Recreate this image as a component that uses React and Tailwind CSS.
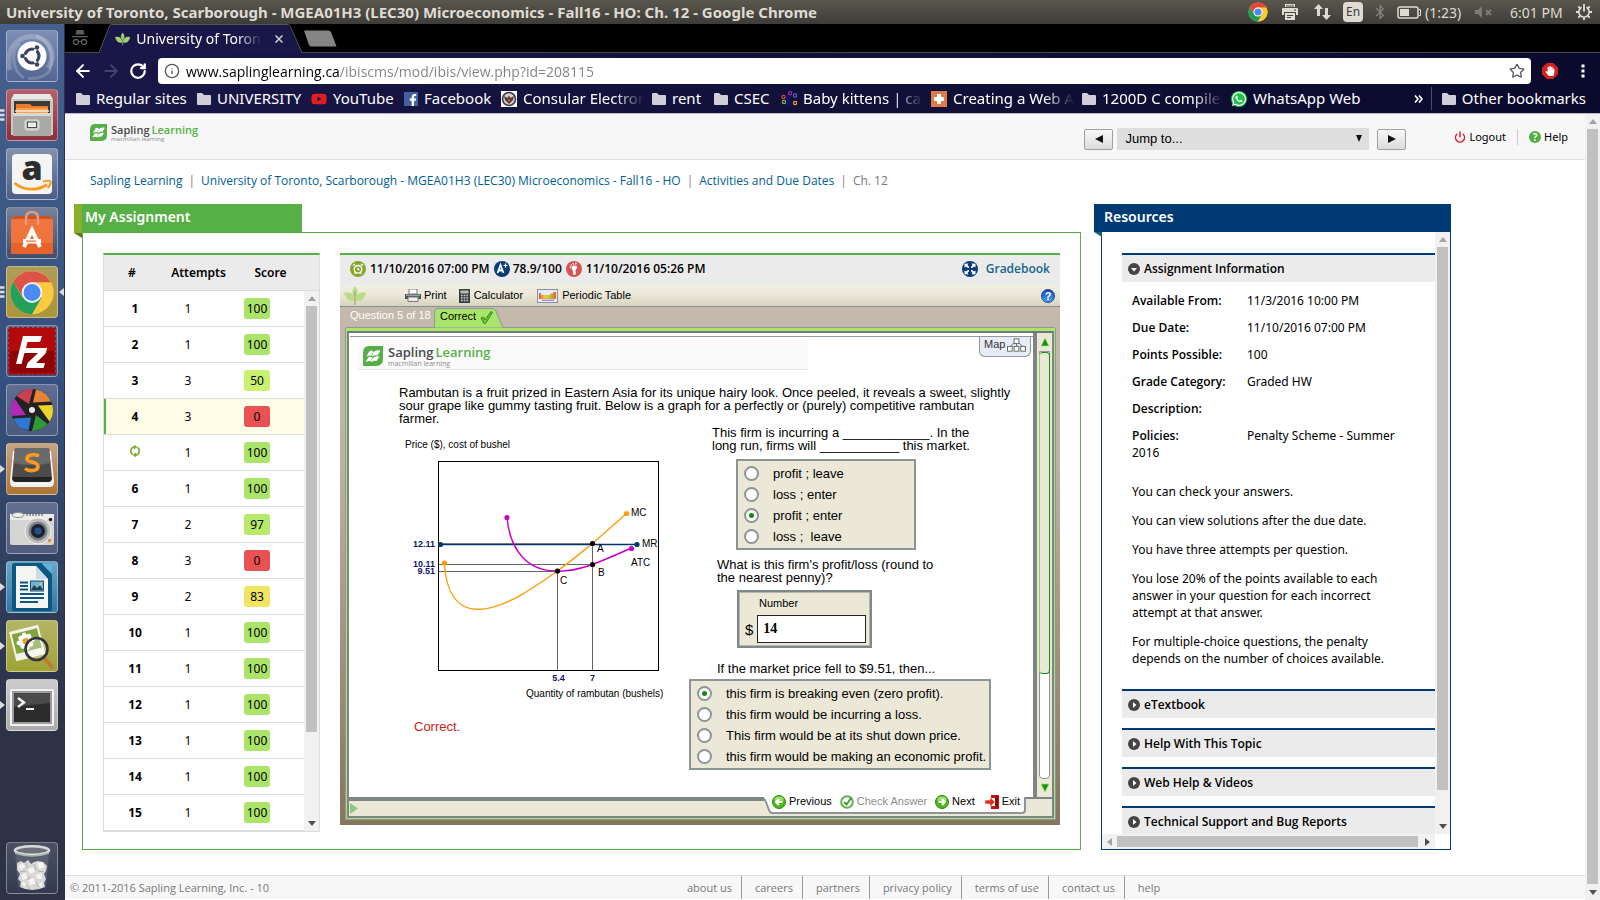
import React from "react";
import { ArrowLeft, ArrowRight, RotateCw, Info, Star, Power } from "lucide-react";
import { FaBluetoothB, FaWhatsapp, FaYoutube, FaFacebookF, FaHandPaper } from "react-icons/fa";

/* ---------- shared drawings ---------- */

function ChromeLogo({ className }) {
  return (
    <svg viewBox="0 0 48 48" className={className} aria-hidden="true">
      <circle cx="24" cy="24" r="23" fill="#fcc934" />
      <path d="M4.1 12.5 A23 23 0 0 0 24 47 L34 29.5 L24 24 L14.4 29.5 Z" fill="#1f9d58" />
      <path d="M43.9 12.5 A23 23 0 0 1 24 47 L34 29 L31 13 Z" fill="#fcc934" />
      <path d="M24 13 H43.9 A23 23 0 0 0 4.1 12.5 L14.5 29.5 L20 14 Z" fill="#e0463b" />
      <circle cx="24" cy="24" r="11" fill="#fff" />
      <circle cx="24" cy="24" r="8.6" fill="#4c8bf5" />
    </svg>
  );
}

function Leaf({ className, color = "#b7d98b" }) {
  return (
    <svg viewBox="0 0 24 20" className={className} aria-hidden="true">
      <path d="M12 0 C8 5 8.500 9 12 13 C15.500 9 16 5 12 0Z" fill={color} />
      <path d="M0 7 C5 5 11 8 11.800 15 C6 18 2 14 0 7Z" fill={color} />
      <path d="M24 7 C19 5 13 8 12.200 15 C18 18 22 14 24 7Z" fill={color} />
      <path d="M12 6 V20" stroke="#a9a35c" strokeWidth="1.200" />
    </svg>
  );
}

function SaplingMark({ className }) {
  return (
    <svg viewBox="0 0 20 20" className={className} aria-hidden="true">
      <path d="M6 0 H20 V13 Q20 20 13 20 H0 V7 Q0 0 6 0Z" fill="#56ae47" />
      <path d="M3.500 10.500 L6.500 5 Q9.500 3.500 10.500 6 Q13 3.500 17.500 4.500 L14.500 9.500 Q11.500 8.500 9.500 10.500 Q8 8.500 3.500 10.500Z" fill="#fff" />
      <path d="M2.500 16 L5.500 11.200 Q8.500 10 9.500 12.200 Q12 9.800 16.500 10.500 L13.500 15 Q11 14 8.500 16 Q7 14.200 2.500 16Z" fill="#fff" />
      <path d="M10.500 6 L8.800 9.500 M9.500 12.200 L7.800 15.300" stroke="#56ae47" strokeWidth=".5" />
    </svg>
  );
}

function Folder() {
  return (
    <svg viewBox="0 0 14 12" className="h-3 w-3.5 shrink-0" aria-hidden="true">
      <path d="M1 0 H5 L7 2 H13 Q14 2 14 3 V11 Q14 12 13 12 H1 Q0 12 0 11 V1 Q0 0 1 0Z" fill="#cfced9" />
    </svg>
  );
}

function Triangle({ dir, color = "#505050" }) {
  const d = {
    up: "M0 5 L4 0 L8 5Z",
    down: "M0 0 H8 L4 5Z",
    left: "M6 0 V8 L1 4Z",
    right: "M1 0 V8 L6 4Z",
  }[dir];
  return (
    <svg viewBox="0 0 8 8" className={dir === "up" || dir === "down" ? "mt-0.5 h-2 w-2" : "h-2 w-2"} aria-hidden="true">
      <path d={d} fill={color} />
    </svg>
  );
}

function ScrollTrack({ thumb }) {
  return (
    <div className="flex w-[15px] shrink-0 grow flex-col items-center bg-[#f1f1f1]" aria-hidden="true">
      <div className="flex h-[15px] items-center justify-center">
        <Triangle dir="up" color="#a3a3a3" />
      </div>
      <div className="flex w-full flex-1 flex-col items-center">
        <div className={"w-[11px] bg-[#c1c1c1] " + thumb} />
      </div>
      <div className="flex h-[15px] items-center justify-center">
        <Triangle dir="down" />
      </div>
    </div>
  );
}

/* ---------- desktop panel ---------- */

function TopPanel() {
  return (
    <header className="flex h-6 shrink-0 items-center bg-linear-to-b from-[#5a574e] to-[#3d3c38] pr-2 pl-1.5 font-['Noto_Sans',sans-serif] text-[#dfdbd2]">
      <h1 className="flex-1 truncate text-[15px] font-bold">
        University of Toronto, Scarborough - MGEA01H3 (LEC30) Microeconomics - Fall16 - HO: Ch. 12 - Google Chrome
      </h1>
      <div className="flex items-center">
        <ChromeLogo className="mr-3.5 h-5 w-5" />
        <svg viewBox="0 0 16 16" className="mr-4 h-4 w-4" aria-hidden="true">
          <path d="M3 0 H13 V3 H3Z M0 5 Q0 4 1 4 H15 Q16 4 16 5 V11 H14 V8 H2 V11 H0Z M3 9 H13 V16 H3Z" fill="#dfdbd2" />
          <path d="M4 2 H12 M5 11.500 H11 M5 13.500 H9 M12 6 H14" stroke="#45443f" />
        </svg>
        <svg viewBox="0 0 17 16" className="mr-3 h-4 w-[17px]" aria-hidden="true">
          <path d="M4.500 0 L9 5 H6 V12 H3 V5 H0Z M12.500 16 L8 11 H11 V4 H14 V11 H17Z" fill="#dfdbd2" />
        </svg>
        <span className="mr-3 flex h-5 w-5 items-center justify-center rounded-sm bg-[#dfdbd2] text-[12px] text-[#3c3b37]">En</span>
        <FaBluetoothB className="mr-3 h-4 w-[10px] text-[#85837b]" />
        <svg viewBox="0 0 24 13" className="mr-1 h-[13px] w-6" aria-hidden="true">
          <rect x="1" y="1" width="20" height="11" rx="2" fill="none" stroke="#dfdbd2" strokeWidth="1.500" />
          <rect x="3" y="3" width="9" height="7" fill="#dfdbd2" />
          <path d="M22 3.500 H23.500 V9.500 H22" fill="none" stroke="#dfdbd2" />
        </svg>
        <span className="w-[50px] text-[14px]">(1:23)</span>
        <svg viewBox="0 0 17 12" className="mr-[18px] h-3 w-[17px]" aria-hidden="true">
          <path d="M0 4 H3 L7 0 V12 L3 8 H0Z" fill="#7d7b74" />
          <path d="M11 4 L16 9 M16 4 L11 9" stroke="#7d7b74" strokeWidth="1.800" />
        </svg>
        <span className="mr-3 w-[54px] text-[14px] whitespace-nowrap">6:01 PM</span>
        <svg viewBox="0 0 16 16" className="h-4 w-4" aria-hidden="true">
          <circle cx="8" cy="8" r="5.200" fill="none" stroke="#dfdbd2" strokeWidth="1.600" />
          <path d="M8 13 V16 M0 8 H3 M13 8 H16 M2.300 2.300 L4.500 4.500 M13.700 2.300 L11.500 4.500 M2.300 13.700 L4.500 11.500 M13.700 13.700 L11.500 11.500" stroke="#dfdbd2" strokeWidth="1.800" />
          <path d="M8 0 V8" stroke="#4a4943" strokeWidth="4.500" />
          <path d="M8 0 V7.500" stroke="#dfdbd2" strokeWidth="1.800" />
        </svg>
      </div>
    </header>
  );
}

/* ---------- launcher ---------- */

const launcherArt = {
  dash: (
    <>
      <path d="M4 40 C-2 18 14 2 34 8 C46 12 50 28 42 38" fill="none" stroke="#fff" strokeOpacity=".22" strokeWidth="5" />
      <path d="M18 48 C6 40 4 22 14 14 M30 6 C44 10 48 26 44 40 C40 46 30 50 22 48" fill="none" stroke="#fff" strokeOpacity=".18" strokeWidth="3" />
      <circle cx="26" cy="26" r="14.500" fill="#fff" />
      <circle cx="26" cy="26" r="7" fill="none" stroke="#3a4463" strokeWidth="3.200" />
      <path d="M26 26 L13 26 M26 26 L32.500 14.700 M26 26 L32.500 37.300" stroke="#fff" strokeWidth="2.500" />
      <circle cx="26" cy="26" r="5" fill="#fff" />
      <circle cx="16.500" cy="26" r="2.300" fill="#3a4463" />
      <circle cx="31" cy="17.500" r="2.300" fill="#3a4463" />
      <circle cx="31" cy="34.500" r="2.300" fill="#3a4463" />
    </>
  ),
  files: (
    <>
      <path d="M8 5 H44 L47 10 V46 H5 V10Z" fill="#c9c9c7" />
      <path d="M8 5 H44 L46 10 H6Z" fill="#e8e8e6" />
      <rect x="8" y="12" width="36" height="14" fill="#3a3a38" />
      <path d="M10 15 H24 L26 17 H42 V24 H10Z" fill="#e87c2a" />
      <path d="M10 19 H42 V25 H10Z" fill="#f6a04d" />
      <path d="M9 22 H43" stroke="#f4ead8" strokeWidth="1.500" />
      <path d="M7 25 H45 V47 H7Z" fill="#a9a9a7" />
      <path d="M7 24 H45 V27 H7Z" fill="#d9d9d7" />
      <rect x="19" y="31" width="14" height="10" rx="2" fill="#c9c9c7" stroke="#dededc" />
      <rect x="21.500" y="33" width="9" height="5.500" fill="#efefed" stroke="#4a4a48" />
    </>
  ),
  amazon: (
    <>
      <rect x="6" y="6" width="40" height="40" rx="4" fill="#f4f4f2" />
      <text x="26" y="31.500" textAnchor="middle" fontFamily="Open Sans, sans-serif" fontWeight="800" fontSize="34" fill="#2e2d2b">a</text>
      <path d="M8.500 35 C18 43 32 43 41 36.500" fill="none" stroke="#f89a1c" strokeWidth="2.800" />
      <path d="M37 33.500 C41 32.500 44 32.500 44.500 33.500 C45 35 43.500 38 41.500 40" fill="none" stroke="#f89a1c" strokeWidth="2" />
    </>
  ),
  software: (
    <>
      <path d="M5 12 L9 9 H44 L47 12 V47 H5Z" fill="#f0743c" />
      <path d="M5 12 L9 9 H44 L47 12Z" fill="#c95423" />
      <path d="M5 36 H47 V47 H5Z" fill="#e8632c" />
      <path d="M20 18 V11 Q20 5 26 5 Q32 5 32 11 V18" fill="none" stroke="#e79a76" strokeWidth="2.600" />
      <path d="M18 40 L26 23 L34 40" fill="none" stroke="#fff" strokeWidth="4" />
      <rect x="17" y="32" width="18" height="4.500" rx="1" fill="#fff" />
      <path d="M20 34.200 H30" stroke="#f0743c" strokeWidth="1.200" />
    </>
  ),
  chrome: (
    <g transform="translate(3.500 4) scale(.94)">
      <circle cx="24" cy="24" r="23" fill="#fcca3f" />
      <path d="M4.100 12.500 A23 23 0 0 0 24 47 L34 29.500 H14Z" fill="#23a05b" />
      <path d="M24 13 H43.900 A23 23 0 0 0 4.100 12.500 L14.500 29.500 L20 14 Z" fill="#dd5347" />
      <circle cx="24" cy="24" r="11" fill="#f3f3f3" />
      <circle cx="24" cy="24" r="9" fill="#4c8bf5" />
    </g>
  ),
  filezilla: (
    <>
      <rect x="3" y="3" width="46" height="46" fill="#b30b0b" stroke="#b30b0b" strokeWidth="2" strokeDasharray="3 2" />
      <rect x="4" y="26" width="44" height="22" fill="#8f0404" />
      <path d="M10 39 L17 11 H36 L34 17 H21.500 L20 23 H30 L28.500 28 H18.500 L15.500 39Z" fill="#fff" />
      <path d="M25 23 H41 L40 28 L30 38 H39 L37.500 43 H20 L21.500 38 L32 28 H24Z" fill="#fff" />
    </>
  ),
  shutter: (
    <g transform="translate(26 26)">
      <circle r="21" fill="#222" />
      <path d="M-15.500 -14 A21 21 0 0 1 1 -21 L-3 -6Z" fill="#c8414f" />
      <path d="M4 -20.600 A21 21 0 0 1 19 -8.500 L1 -7.500Z" fill="#e8843a" />
      <path d="M20.400 -5 A21 21 0 0 1 17.500 11.500 L6 -4.500Z" fill="#ecd32e" />
      <path d="M15.500 14 A21 21 0 0 1 0 21 L4 5Z" fill="#2f9a35" />
      <path d="M-3.500 20.600 A21 21 0 0 1 -19 8.500 L-1 7.500Z" fill="#2f77d2" />
      <path d="M-20.400 6 A21 21 0 0 1 -17.500 -11.500 L-6 5Z" fill="#b02ab5" />
      <circle r="3" fill="#e8e8e8" />
    </g>
  ),
  sublime: (
    <>
      <path d="M7 8 H45 L48 38 Q48 44 44 44 H8 Q4 44 4 38Z" fill="#f2f2f2" />
      <path d="M9 5 H43 L46 35 Q46 39 42 39 H10 Q6 39 6 35Z" fill="#4b4b4b" />
      <path d="M9 5 H43 L44.500 20 Q26 24 7.500 20Z" fill="#6a6a6a" />
      <path d="M6.500 34 H45.500 V36 Q45 39 42 39 H10 Q7 39 6.500 36Z" fill="#222" />
      <path d="M33 13 C28 10.500 21 12 21 16 C21 20 32 18 32 23.500 C32 28 23 29 19 25.500" fill="none" stroke="#ff9a1f" strokeWidth="3.600" />
    </>
  ),
  camera: (
    <>
      <rect x="4" y="12" width="44" height="31" rx="2" fill="#d4d4d2" />
      <rect x="4" y="12" width="44" height="6" fill="#ececea" />
      <ellipse cx="12" cy="13" rx="6" ry="2.500" fill="#efefed" stroke="#8d8d8b" />
      <path d="M20 13 H38" stroke="#7f7f7d" strokeWidth="1.500" strokeDasharray="2 1" />
      <circle cx="32" cy="29" r="13" fill="#bdbdbb" stroke="#f3f3f1" />
      <circle cx="32" cy="29" r="9.500" fill="#7b7d83" />
      <circle cx="32" cy="29" r="7" fill="#1b2233" />
      <circle cx="32" cy="29" r="3.500" fill="#27508f" />
      <circle cx="44.500" cy="17.500" r="1.800" fill="#222" />
      <rect x="42" y="37" width="3" height="3" fill="#e8922c" />
    </>
  ),
  writer: (
    <>
      <path d="M9 2 H36 L46 13 V47 Q46 50 43 50 H9 Q6 50 6 47 V5 Q6 2 9 2Z" fill="#0d5780" />
      <path d="M10 5 H30 L42 18 V47 H10Z" fill="#f5f5f3" />
      <path d="M30 5 V18 H42Z" fill="#c9dbe6" />
      <path d="M36 3 L46 13 V4 Q46 3 45 3Z" fill="#5eb3dd" />
      <path d="M14 21.500 H22 M14 25 H22 M14 28.500 H22 M14 33 H38 M14 37 H38 M14 41 H32" stroke="#0d5780" strokeWidth="1.800" />
      <rect x="24.500" y="20" width="13" height="10" fill="#6fb3d8" stroke="#0d5780" />
      <path d="M25 29 L28 24 L31 27 L34 24.500 L37 29Z" fill="#2c3c44" />
      <circle cx="34.500" cy="23" r="1.200" fill="#f3c542" />
    </>
  ),
  viewer: (
    <>
      <g transform="rotate(-14 21 22)">
        <rect x="6" y="8" width="30" height="30" fill="#f2f2ec" />
        <rect x="8" y="11" width="26" height="20" fill="#7fa53c" />
        <g fill="#fff">
          <ellipse cx="20" cy="16" rx="2.500" ry="4" /><ellipse cx="20" cy="26" rx="2.500" ry="4" />
          <ellipse cx="14.500" cy="21" rx="4" ry="2.500" /><ellipse cx="25.500" cy="21" rx="4" ry="2.500" />
          <circle cx="16" cy="17" r="2.600" /><circle cx="24" cy="25" r="2.600" /><circle cx="24" cy="17" r="2.600" /><circle cx="16" cy="25" r="2.600" />
        </g>
        <circle cx="20" cy="21" r="3.200" fill="#f09a2a" />
      </g>
      <path d="M39 39 L46 47" stroke="#b9793f" strokeWidth="3.500" strokeLinecap="round" />
      <circle cx="30.500" cy="29" r="11" fill="#fff" fillOpacity=".3" stroke="#34353c" strokeWidth="2.600" />
    </>
  ),
  terminal: (
    <>
      <rect x="4" y="10" width="44" height="37" rx="1" fill="#f3f3f3" />
      <rect x="6" y="12" width="40" height="33" fill="#9c9c9c" />
      <rect x="8" y="14" width="36" height="29" fill="#2c2c2c" />
      <path d="M8 14 H44 V24 Q26 26 8 28Z" fill="#4a4a4a" />
      <path d="M12 19 L18 23.500 L12 28" fill="none" stroke="#f0f0f0" strokeWidth="2.400" />
      <path d="M20 30 H28" stroke="#f0f0f0" strokeWidth="2" />
    </>
  ),
  trash: (
    <>
      <path d="M9 10 L12 45 Q26 51 40 45 L43 10Z" fill="#fff" fillOpacity=".12" />
      <path d="M11 21 L15 19 L18 21 L22 18 L25 22 L28 20 L32 19 L37 20 L41 24 L40 29 L38 32 L40 37 L38 41 L39 45 Q26 51 14 45 L15 40 L12 37 L14 32 L11 28Z" fill="#d8d8d6" />
      <path d="M12 24 L17 21 L19 25 L15 28Z M31 21 L37 20 L38 25 L33 27Z M21 27 L27 25 L29 30 L24 32Z M15 33 L20 31 L21 36 L17 38Z M30 33 L36 31 L36 37 L31 37Z M22 38 L28 36 L29 42 L24 43Z M14 41 L19 40 L20 45Z M32 42 L37 40 L35 46Z" fill="#f5f5f3" />
      <path d="M20 21 L22 27 M28 22 L30 28 M14 30 L20 29 M32 29 L38 30 M24 34 L22 38 M20 43 L24 47 M30 40 L33 45" fill="none" stroke="#b0b0ae" strokeWidth="1" />
      <ellipse cx="26" cy="8.500" rx="17" ry="4.200" fill="#6d7079" stroke="#d9dbd6" strokeWidth="2.600" />
      <path d="M9 11 Q26 17 43 11" fill="none" stroke="#aeb0ac" strokeWidth="1.500" />
    </>
  ),
};

const launcherItems = [
  { id: "dash", label: "Search your computer", tile: "bg-linear-to-b from-[#7d8fb4] to-[#536592]" },
  { id: "files", label: "Files", tile: "bg-linear-to-b from-[#b5606c] to-[#8c2f3a]", mark: "open" },
  { id: "amazon", label: "Amazon", tile: "bg-linear-to-b from-[#8191ad] to-[#4b5f86]" },
  { id: "software", label: "Ubuntu Software", tile: "bg-linear-to-b from-[#76829b] to-[#414f6e]" },
  { id: "chrome", label: "Google Chrome", tile: "bg-linear-to-b from-[#ad9d58] to-[#ad9438]", mark: "active" },
  { id: "filezilla", label: "FileZilla", tile: "bg-linear-to-b from-[#5f7396] to-[#3d5480]" },
  { id: "shutter", label: "Image capture", tile: "bg-linear-to-b from-[#5e6d92] to-[#4d5a80]" },
  { id: "sublime", label: "Sublime Text", tile: "bg-linear-to-b from-[#c4a584] to-[#ad7434]", mark: "run" },
  { id: "camera", label: "Camera", tile: "bg-linear-to-b from-[#626f90] to-[#525d7e]" },
  { id: "writer", label: "LibreOffice Writer", tile: "bg-linear-to-b from-[#6aa5c6] to-[#3078a5]", mark: "run" },
  { id: "viewer", label: "Image Viewer", tile: "bg-linear-to-b from-[#b5b566] to-[#a0a232]", mark: "run" },
  { id: "terminal", label: "Terminal", tile: "bg-linear-to-b from-[#cccccc] to-[#a9a9a9]", mark: "run" },
];

function LauncherTile({ item }) {
  return (
    <div className="relative px-1.5">
      <button type="button" aria-label={item.label} className={"block h-[52px] w-[52px] overflow-hidden rounded border border-white/35 " + item.tile}>
        <svg viewBox="1 1 50 50" className="h-full w-full" aria-hidden="true">{launcherArt[item.id]}</svg>
      </button>
      {item.mark === "run" && (
        <svg viewBox="0 0 5 8" className="absolute top-[22px] left-0 h-2 w-[5px]" aria-hidden="true"><path d="M0 0 L5 4 L0 8Z" fill="#dcdcdc" /></svg>
      )}
      {(item.mark === "open" || item.mark === "active") && (
        <svg viewBox="0 0 5 12" className="absolute top-5 left-0 h-3 w-[5px]" aria-hidden="true"><path d="M0 1.500 H4.500 M0 6 H4.500 M0 10.500 H4.500" stroke="#dcdcdc" strokeWidth="2.500" /></svg>
      )}
      {item.mark === "active" && (
        <svg viewBox="0 0 5 8" className="absolute top-[22px] right-0 h-2 w-[5px]" aria-hidden="true"><path d="M5 0 L0 4 L5 8Z" fill="#dcdcdc" /></svg>
      )}
    </div>
  );
}

function Launcher() {
  return (
    <nav className="flex w-[65px] shrink-0 flex-col justify-between border-r border-[#27304a] bg-linear-to-b from-[#46618f] via-[#34507f] via-40% to-[#2d3245] to-80% pt-1.5 pb-1.5">
      <div className="flex flex-col gap-[7px]">
        {launcherItems.map((i) => <LauncherTile key={i.id} item={i} />)}
      </div>
      <LauncherTile item={{ id: "trash", label: "Trash", tile: "bg-linear-to-b from-[#4a5064] to-[#343a50]" }} />
    </nav>
  );
}

/* ---------- browser chrome ---------- */

const fade = "overflow-hidden [mask-image:linear-gradient(90deg,#000_75%,transparent)]";

function TabStrip() {
  return (
    <div className="flex h-[29px] items-stretch border-b border-[#4a4a48] bg-black">
      <div className="flex w-[34px] items-center justify-center">
        <svg viewBox="0 0 16 16" className="mr-1 h-4 w-4" aria-hidden="true">
          <path d="M4.500 0 H11.500 L12.500 4.500 H3.500Z M0 6 H16 V7.200 H0Z" fill="#5d5d5d" />
          <circle cx="4" cy="12" r="2.500" fill="none" stroke="#5d5d5d" strokeWidth="1.300" />
          <circle cx="12" cy="12" r="2.500" fill="none" stroke="#5d5d5d" strokeWidth="1.300" />
          <path d="M6.500 11.500 H9.500" stroke="#5d5d5d" />
        </svg>
      </div>
      <div className="relative -mb-px flex w-[204px] items-center pr-4 pl-4">
        <svg viewBox="0 0 205 29" preserveAspectRatio="none" className="absolute inset-0 h-full w-full" aria-hidden="true">
          <path d="M0 29 L11 1 Q11.500 0.500 12.500 0.500 H190 L204 29Z" fill="#191747" />
          <path d="M0 28.500 L11 1 Q11.500 0.500 12.500 0.500 H190 Q191 0.500 191.500 1 L204 28.500" fill="none" stroke="#55554f" />
        </svg>
        <Leaf className="relative h-[14px] w-4" color="#9fd070" />
        <span className="relative ml-1.5 w-[131px] overflow-hidden text-[14px] whitespace-nowrap text-white [mask-image:linear-gradient(90deg,#000_80%,transparent)]">University of Toronto</span>
        <button type="button" aria-label="Close tab" className="relative ml-2.5 flex h-4 w-4 items-center justify-center">
          <svg viewBox="0 0 8 8" className="h-2 w-2" aria-hidden="true"><path d="M0.500 0.500 L7.500 7.500 M7.500 0.500 L0.500 7.500" stroke="#d0d0da" strokeWidth="1.500" /></svg>
        </button>
      </div>
      <button type="button" aria-label="New tab" className="flex items-center">
        <svg viewBox="0 0 34 17" className="h-[17px] w-[34px]" aria-hidden="true"><path d="M1 0.500 H25 Q27 0.500 28 2 L33.500 16.500 H9 Q7 16.500 6 15Z" fill="#858585" /></svg>
      </button>
    </div>
  );
}

function Toolbar() {
  return (
    <div className="flex h-[31px] items-end pr-[11px] pl-3 text-white">
      <button type="button" aria-label="Back" className="flex h-[26px] w-7 items-center"><ArrowLeft className="-ml-1 h-5 w-5" strokeWidth={2.4} /></button>
      <button type="button" aria-label="Forward" className="flex h-[26px] w-7 items-center"><ArrowRight className="-ml-1 h-5 w-5 text-[#45446b]" strokeWidth={2.2} /></button>
      <button type="button" aria-label="Reload" className="flex h-[26px] w-[25px] items-center"><RotateCw className="-ml-1 h-[18px] w-[18px]" strokeWidth={3} /></button>
      <div className="flex h-[26px] flex-1 items-center rounded-sm bg-white pr-1.5 pl-1.5">
        <Info className="h-4 w-4 text-[#5a5a5a]" />
        <input
          aria-label="Address"
          type="text"
          defaultValue="www.saplinglearning.ca/ibiscms/mod/ibis/view.php?id=208115"
          className="ml-1.5 h-[26px] flex-1 bg-[linear-gradient(90deg,#000_154px,#808080_154px)] bg-clip-text font-['Open_Sans',sans-serif] text-[14px] text-transparent outline-none"
        />
        <button type="button" aria-label="Bookmark this page"><Star className="h-4 w-4 text-[#5a5a5a]" /></button>
      </div>
      <button type="button" aria-label="Ad blocker" className="ml-[11px] flex h-[26px] items-center">
        <span className="flex h-4 w-4 items-center justify-center bg-[#d81f1f] [clip-path:polygon(30%_0,70%_0,100%_30%,100%_70%,70%_100%,30%_100%,0_70%,0_30%)]">
          <FaHandPaper className="h-2.5 w-2.5 text-white" />
        </span>
      </button>
      <button type="button" aria-label="Menu" className="ml-[19px] flex h-[26px] w-3 items-center justify-center">
        <svg viewBox="0 0 4 14" className="h-3.5 w-1" aria-hidden="true"><path d="M0.500 0.500 H3.500 V3.500 H0.500Z M0.500 5.500 H3.500 V8.500 H0.500Z M0.500 10.500 H3.500 V13.500 H0.500Z" fill="#fff" /></svg>
      </button>
    </div>
  );
}

const bookmarkIcons = {
  folder: <Folder />,
  youtube: <FaYoutube className="h-4 w-4 shrink-0 text-[#e02020]" />,
  facebook: <span className="flex h-3.5 w-3.5 shrink-0 items-end justify-end bg-[#4460a0]"><FaFacebookF className="h-3 w-2.5" /></span>,
  seal: (
    <svg viewBox="0 0 16 16" className="h-4 w-4 shrink-0" aria-hidden="true">
      <rect width="16" height="16" fill="#fff" /><circle cx="8" cy="8" r="6.500" fill="#d9d3c6" stroke="#3d3563" strokeWidth="1.600" />
      <path d="M3 4.500 Q4.500 6 6.500 7 L8 4.500 L9.500 7 Q11.500 6 13 4.500 L12 9 L10 11 L8 13 L6 11 L4 9Z" fill="#4a3b2a" /><path d="M6.800 8 H9.200 V10 L8 11.200 L6.800 10Z" fill="#c44" />
    </svg>
  ),
  kittens: (
    <svg viewBox="0 0 16 16" className="h-4 w-4 shrink-0" aria-hidden="true" fill="none" strokeWidth="1.200">
      <circle cx="2.500" cy="6" r="1.600" stroke="#e0403a" /><circle cx="3" cy="11" r="1.600" stroke="#7bc043" /><circle cx="9" cy="2.200" r="1.600" stroke="#9c27b0" />
      <circle cx="14" cy="4.500" r="1.600" stroke="#5b5bd0" /><circle cx="14" cy="12" r="1.600" stroke="#f09a2a" /><path d="M6 5 V15 M11 5 L7 10 L11 15" stroke="#141466" strokeWidth="2" />
    </svg>
  ),
  cross: (
    <svg viewBox="0 0 16 16" className="h-4 w-4 shrink-0" aria-hidden="true"><rect width="16" height="16" fill="#e2794a" /><path d="M6 3 H10 V6 H13 V10 H10 V13 H6 V10 H3 V6 H6Z" fill="#fff" /></svg>
  ),
  whatsapp: <span className="flex h-4 w-4 shrink-0 items-center justify-center rounded-full bg-[#1fbf4c]"><FaWhatsapp className="h-4 w-4" /></span>,
};

const bookmarks = [
  ["folder", "Regular sites", "w-[121px]"],
  ["folder", "UNIVERSITY", "w-[114px]"],
  ["youtube", "YouTube", "w-[93px]"],
  ["facebook", "Facebook", "w-[97px]"],
  ["seal", "Consular Electronic", "w-[151px]", true],
  ["folder", "rent", "w-[62px]"],
  ["folder", "CSEC", "w-[67px]"],
  ["kittens", "Baby kittens | cats", "w-[150px]", true],
  ["cross", "Creating a Web App", "w-[151px]", true],
  ["folder", "1200D C compiler", "w-[149px]", true],
  ["whatsapp", "WhatsApp Web", "w-[140px]"],
];

function BookmarkBar() {
  return (
    <div className="flex h-[29px] items-center pr-[14px] pl-[11px] text-[15px] text-white">
      {bookmarks.map(([icon, label, w, long]) => (
        <a href="#" key={label} className={"flex shrink-0 items-center gap-1.5 " + (long ? "pr-2 " : "pr-3 ") + w}>
          {bookmarkIcons[icon]}
          <span className={long ? "whitespace-nowrap " + fade : "whitespace-nowrap"}>{label}</span>
        </a>
      ))}
      <div className="flex flex-1 items-center justify-end">
        <button type="button" aria-label="More bookmarks" className="mr-2">
          <svg viewBox="0 0 9 8" className="h-2 w-[9px]" aria-hidden="true"><path d="M1 0.500 L4 4 L1 7.500 M5 0.500 L8 4 L5 7.500" fill="none" stroke="#fff" strokeWidth="1.600" /></svg>
        </button>
        <a href="#" className="flex items-center gap-1.5 border-l border-[#4b4a6e] pl-2.5 whitespace-nowrap">
          <Folder />
          Other bookmarks
        </a>
      </div>
    </div>
  );
}

/* ---------- page ---------- */

const arrowButton = "flex h-[21px] w-[29px] items-center justify-center rounded-xs border border-[#a0a0a0] bg-linear-to-b from-[#f8f8f8] to-[#dcdcdc]";

function SiteHeader() {
  return (
    <div className="flex h-[46px] shrink-0 items-start border-b border-[#e0e0e0] bg-[#f7f7f7] pr-[17px] pl-[25px]">
      <a href="#" className="mt-2.5 flex items-start gap-1">
        <SaplingMark className="h-[17px] w-[17px]" />
        <span className="flex flex-col font-['Open_Sans',sans-serif]">
          <span className="text-[11px] leading-[11px] font-semibold text-[#4a4a4a]">Sapling<span className="pl-0.5 text-[#56b046]">Learning</span></span>
          <span className="text-[6px] leading-[8px] text-[#8c8c8c]">macmillan learning</span>
        </span>
      </a>
      <form className="mt-3.5 ml-auto flex items-center gap-1 font-['Liberation_Sans',Arial,sans-serif]">
        <button type="button" aria-label="Previous activity" className={arrowButton}><svg viewBox="0 0 8 8" className="h-2 w-2" aria-hidden="true"><path d="M8 0 V8 L0 4Z" fill="#111" /></svg></button>
        <div className="relative">
          <select aria-label="Jump to activity" className="block h-[22px] w-[252px] appearance-none bg-[#dedede] pl-2 text-[13px] text-black">
            <option>Jump to...</option>
          </select>
          <svg viewBox="0 0 6 7" className="absolute top-[7px] right-[7px] h-[7px] w-1.5" aria-hidden="true"><path d="M0 0 H6 L3 7Z" fill="#111" /></svg>
        </div>
        <button type="button" aria-label="Next activity" className={arrowButton + " ml-1"}><svg viewBox="0 0 8 8" className="h-2 w-2" aria-hidden="true"><path d="M0 0 V8 L8 4Z" fill="#111" /></svg></button>
      </form>
      <div className="mt-[15px] ml-12 flex items-center text-[11px]">
        <a href="#" className="flex h-4 items-center gap-[3px] border-r border-[#ccc] pr-[11px]"><Power className="h-3 w-3 text-[#d8232f]" strokeWidth={3} />Logout</a>
        <a href="#" className="ml-[11px] flex h-4 items-center gap-[3px]"><span className="flex h-3 w-3 items-center justify-center rounded-full bg-[#4fae3e] text-[10px] leading-3 font-bold text-white">?</span>Help</a>
      </div>
    </div>
  );
}

function Breadcrumbs() {
  return (
    <nav className="flex h-[44px] shrink-0 items-center gap-1.5 pb-[3px] pl-[25px] font-['Open_Sans',sans-serif] text-[12px] whitespace-nowrap text-[#00618f]">
      <a href="#">Sapling Learning</a>
      <span className="text-[#8a7a7a]">|</span>
      <a href="#">University of Toronto, Scarborough - MGEA01H3 (LEC30) Microeconomics - Fall16 - HO</a>
      <span className="text-[#8a7a7a]">|</span>
      <a href="#">Activities and Due Dates</a>
      <span className="text-[#8a7a7a]">|</span>
      <span className="text-[#777]">Ch. 12</span>
    </nav>
  );
}

const badge = {
  100: "bg-[#aae469]",
  97: "bg-[#b7ea6b]",
  83: "bg-[#efe562]",
  50: "bg-[#c9f170]",
  0: "bg-[#e85252]",
};

const questions = [
  [1, 1, 100], [2, 1, 100], [3, 3, 50], [4, 3, 0], [5, 1, 100], [6, 1, 100], [7, 2, 97], [8, 3, 0],
  [9, 2, 83], [10, 1, 100], [11, 1, 100], [12, 1, 100], [13, 1, 100], [14, 1, 100], [15, 1, 100],
];

function ScoreTable() {
  return (
    <div className="flex w-[217px] shrink-0 flex-col border border-t-2 border-[#dcdcdc] border-t-[#56b046] text-[12px]">
      <div className="flex">
        <table className="block w-[200px]">
          <thead className="block">
            <tr className="grid h-9 grid-cols-[56px_77px_67px] items-center border-b border-[#dcdcdc] bg-[#ebebeb]">
              <th className="font-semibold">#</th>
              <th className="font-semibold">Attempts</th>
              <th className="font-semibold">Score</th>
            </tr>
          </thead>
          <tbody className="block">
            {questions.map(([n, attempts, score]) => (
              <tr
                key={n}
                className={
                  "grid h-9 grid-cols-[62px_44px_94px] items-center border-b border-[#dcdcdc] text-center " +
                  (n === 4 ? "bg-[#fffde6] shadow-[inset_2px_0_#56b046]" : "bg-white")
                }
              >
                <td className="font-bold">
                  {n === 5 ? (
                    <svg viewBox="0 0 12 12" className="mx-auto mb-1 h-3 w-3" role="img" aria-label="5, in progress">
                      <path d="M3.600 9.600 A4.300 4.300 0 0 1 5.500 1.800 M8.400 2.400 A4.300 4.300 0 0 1 6.500 10.200" fill="none" stroke="#86ac3c" strokeWidth="1.700" />
                      <path d="M5 -0.500 L8.500 2 L5 4.500Z M7 12.500 L3.500 10 L7 7.500Z" fill="#86ac3c" />
                    </svg>
                  ) : n}
                </td>
                <td>{attempts}</td>
                <td><span className={"mx-auto flex h-[21px] w-[26px] items-center justify-center rounded-[3px] " + badge[score]}>{score}</span></td>
              </tr>
            ))}
          </tbody>
        </table>
        <div className="flex w-[15px] flex-col">
          <div className="h-9 border-b border-[#dcdcdc] bg-[#ebebeb]" />
          <ScrollTrack thumb="h-[426px]" />
        </div>
      </div>
    </div>
  );
}

/* ---------- question player ---------- */

function StatusBar() {
  return (
    <div className="flex h-[30px] items-center bg-[#ebebeb] pr-[10px] pb-0.5 pl-[10px] font-['Open_Sans',sans-serif] text-[12px] font-semibold">
      <svg viewBox="0 0 16 16" className="h-4 w-4" aria-hidden="true">
        <circle cx="8" cy="8" r="8" fill="#86a62a" />
        <circle cx="8" cy="8.300" r="3.800" fill="none" stroke="#fff" strokeWidth="1.400" />
        <path d="M3 4.500 L5 3 M13 4.500 L11 3 M4.500 13 L5.500 11.500 M11.500 13 L10.500 11.500 M8 6.500 V8.500 H9.500" stroke="#fff" strokeWidth="1.300" />
      </svg>
      <span className="ml-1">11/10/2016 07:00 PM</span>
      <svg viewBox="0 0 16 16" className="ml-1 h-4 w-4" aria-hidden="true">
        <circle cx="8" cy="8" r="8" fill="#0a3c78" />
        <path d="M3.500 12 L6.500 4 L9.500 12 M4.500 9.500 H8.500" fill="none" stroke="#fff" strokeWidth="1.800" />
        <path d="M11.500 2.500 V6.500 M9.500 4.500 H13.500" stroke="#fff" strokeWidth="1.200" />
      </svg>
      <span className="ml-[3px]">78.9/100</span>
      <svg viewBox="0 0 16 16" className="ml-1 h-4 w-4" aria-hidden="true">
        <circle cx="8" cy="8" r="8" fill="#d75452" />
        <path d="M6 5.500 Q9 3.500 11 5.500 Q11.500 7.500 9.500 9 Q9.500 10.500 10 12 Q9.800 14 8 14 Q6.300 13.500 7 10.500 Q5 7.500 6 5.500Z" fill="#fff" />
        <path d="M4.500 6 V6.500 M5.300 4 V4.300 M7.200 2.700 V3 M9.800 2.300 V3" stroke="#fff" strokeWidth="1.400" strokeLinecap="round" />
      </svg>
      <span className="ml-1">11/10/2016 05:26 PM</span>
      <a href="#" className="ml-auto flex items-center gap-2 text-[#17668f]">
        <svg viewBox="0 0 16 16" className="h-4 w-4" aria-hidden="true">
          <circle cx="8" cy="8" r="8" fill="#0a3c78" />
          <path d="M2.500 6.500 V2.800 L6.500 2.500 L5.500 4 L7 5.800 V7 H5.800 L4 5.500Z M13.500 6.500 V2.800 L9.500 2.500 L10.500 4 L9 5.800 V7 H10.200 L12 5.500Z M2.500 9.500 V13.200 L6.500 13.500 L5.500 12 L7 10.200 V9 H5.800 L4 10.500Z M13.500 9.500 V13.200 L9.500 13.500 L10.500 12 L9 10.200 V9 H10.200 L12 10.500Z" fill="#fff" />
        </svg>
        Gradebook
      </a>
    </div>
  );
}

function PlayerToolbar() {
  return (
    <div className="flex h-[22px] items-center border-b border-[#86919a] bg-linear-to-b from-[#f1efe2] via-[#eae7d8] via-50% to-[#d6d3be] pr-[5px] pl-1 text-[11px]">
      <Leaf className="h-[19px] w-[22px]" color="#b9dc8b" />
      <button type="button" className="ml-[39px] flex items-center gap-[3px]">
        <svg viewBox="0 0 16 13" className="h-[13px] w-4" aria-hidden="true">
          <path d="M4 0 H12 V5 H4Z" fill="#fff" stroke="#777" />
          <path d="M0 5 H16 V10 H0Z" fill="#4d5052" /><path d="M1 5.500 H15 V7 H1Z" fill="#9a9da0" />
          <path d="M3 8 H13 V12.500 H3Z" fill="#eee" stroke="#777" /><rect x="12" y="7.500" width="2" height="1.200" fill="#3c3" />
        </svg>
        Print
      </button>
      <button type="button" className="ml-3 flex items-center gap-1">
        <svg viewBox="0 0 11 14" className="h-3.5 w-[11px]" aria-hidden="true">
          <rect width="11" height="14" fill="#3b3e40" /><rect x="1.500" y="1.500" width="8" height="3" fill="#b5c0a8" />
          <path d="M2 6.500 H9.500 M2 9 H9.500 M2 11.500 H9.500" stroke="#c9c9c9" strokeWidth="1.500" strokeDasharray="1.700 1" />
        </svg>
        Calculator
      </button>
      <button type="button" className="ml-3.5 flex items-center gap-1">
        <svg viewBox="0 0 21 14" className="h-3.5 w-[21px]" aria-hidden="true">
          <defs><linearGradient id="spectrum"><stop offset="0" stopColor="#ee4a3a" /><stop offset=".3" stopColor="#f5c52a" /><stop offset=".6" stopColor="#b9cf3a" /><stop offset="1" stopColor="#f0602a" /></linearGradient></defs>
          <rect x=".5" y=".5" width="20" height="13" fill="#e7eefb" stroke="#8890a5" />
          <path d="M2 4 H4 V6 H13 V4.500 H16 V3 H19 V10 H2Z" fill="url(#spectrum)" /><rect x="5" y="10.500" width="12" height="1.500" fill="#b38ae8" />
        </svg>
        Periodic Table
      </button>
      <button type="button" aria-label="Help" className="ml-auto flex h-3.5 w-3.5 items-center justify-center rounded-full border border-[#1a3f96] bg-linear-to-b from-[#1d3fb5] to-[#49a9f2] text-[11px] leading-3 font-bold text-white">?</button>
    </div>
  );
}

function Choices({ name, options, checked, className }) {
  return (
    <fieldset className={"border-2 border-[#8d9594] bg-[#ebe8d7] pt-[2px] pb-px " + className}>
      {options.map((o, i) => (
        <label key={o} className="flex h-[21px] items-center whitespace-pre">
          <input
            type="radio"
            name={name}
            defaultChecked={i === checked}
            className="h-[15px] w-[15px] appearance-none rounded-full border-2 border-[#8d9598] bg-white checked:bg-[radial-gradient(circle,#128a12_0_2px,#fff_3px)]"
          />
          <span className="ml-3.5">{o}</span>
        </label>
      ))}
    </fieldset>
  );
}

function Graph() {
  return (
    <svg viewBox="400 430 270 270" className="mt-1 ml-[50px] h-[270px] w-[270px]" role="img" aria-label="Cost curves of the firm" fontFamily="Liberation Sans, Arial, sans-serif" fontSize="10">
      <text x="405" y="448">Price ($), cost of bushel</text>
      <path d="M438 564.500 H592.500 M438 571.500 H557.500 M557.500 571.500 V670 M592.500 544 V670" stroke="#666" fill="none" />
      <rect x="438.500" y="461.500" width="220" height="209" fill="none" stroke="#000" />
      <path d="M440 544.500 H637" stroke="#00366f" strokeWidth="1.400" />
      <path d="M438 543.500 H592" stroke="#444" strokeWidth=".6" />
      <path d="M444.500 563 C446 594 458 609.500 478 609.500 C504 609 535 587 557.300 571 C570 562 580 553.500 592.500 543.500 L626.500 513.500" fill="none" stroke="#ff9c0a" strokeWidth="1.400" />
      <path d="M507 517.500 C509 540 520 570 555 571 C578 572.500 600 562 631.500 548" fill="none" stroke="#c800c8" strokeWidth="1.500" />
      <g fill="#ff9c0a"><circle cx="444.500" cy="563" r="2.600" /><circle cx="626.500" cy="513.500" r="2.600" /></g>
      <g fill="#c800c8"><circle cx="507" cy="517.500" r="2.600" /><circle cx="631.500" cy="548.500" r="2.600" /></g>
      <g fill="#00366f"><circle cx="440.500" cy="544.500" r="2.600" /><circle cx="637" cy="544.500" r="2.600" /></g>
      <g fill="#000"><circle cx="557.500" cy="571" r="2.600" /><circle cx="592.500" cy="543.500" r="2.600" /><circle cx="592.500" cy="564.500" r="2.600" /></g>
      <text x="631" y="515.500">MC</text>
      <text x="642" y="546.500">MR</text>
      <text x="597" y="551.500">A</text>
      <text x="631" y="565.500">ATC</text>
      <text x="598" y="576">B</text>
      <text x="560" y="583.500">C</text>
      <g fontSize="9" fontWeight="bold" fill="#14146e">
        <text x="435" y="547" textAnchor="end">12.11</text>
        <text x="435" y="567" textAnchor="end">10.11</text>
        <text x="435" y="574" textAnchor="end">9.51</text>
        <text x="558.500" y="681" textAnchor="middle">5.4</text>
        <text x="592.500" y="681" textAnchor="middle">7</text>
      </g>
      <text x="526" y="697">Quantity of rambutan (bushels)</text>
    </svg>
  );
}

function RoundIcon({ kind }) {
  return (
    <svg viewBox="0 0 14 14" className="h-3.5 w-3.5" aria-hidden="true">
      {kind === "check" ? (
        <>
          <circle cx="7" cy="7" r="5.800" fill="#fff" stroke="#5fae4a" strokeWidth="2" />
          <path d="M4 7 L6.500 9.500 L11.500 2.500" fill="none" stroke="#3f9a2c" strokeWidth="1.800" />
        </>
      ) : (
        <>
          <circle cx="7" cy="7" r="6.500" fill="#4db81c" stroke="#2f8412" />
          <ellipse cx="7" cy="4.500" rx="4.500" ry="3" fill="#b5ec8a" fillOpacity=".7" />
          {kind === "prev" ? (
            <path d="M10.500 7 H4.500 M7 4 L4 7 L7 10" fill="none" stroke="#fff" strokeWidth="2" />
          ) : (
            <path d="M3.500 7 H9.500 M7 4 L10 7 L7 10" fill="none" stroke="#fff" strokeWidth="2" />
          )}
        </>
      )}
    </svg>
  );
}

function PlayerNav() {
  return (
    <div className="flex h-[19px] bg-[#ebe8d7]">
      <div className="flex flex-1 items-center border-t-4 border-[#7f8485]">
        <svg viewBox="0 0 8 11" className="ml-px h-[11px] w-2" aria-hidden="true"><path d="M0 0 L8 5.500 L0 11Z" fill="#8cc784" /></svg>
      </div>
      <svg viewBox="0 0 8 19" className="h-[19px] w-2" aria-hidden="true">
        <path d="M0 0 H8 V16 Q6 15.500 5 13 L2 5 L0 2Z" fill="#fff" />
        <path d="M0 2 Q1 2.500 2 5 L5 13 Q6 16 8 16" fill="none" stroke="#8d9598" strokeWidth="2" />
      </svg>
      <div className="mb-0.5 flex w-[254px] items-center rounded-br border-r-2 border-b-2 border-[#8d9598] bg-white pb-1.5 text-[11px] whitespace-nowrap">
        <button type="button" className="flex h-3 items-center gap-[3px]"><RoundIcon kind="prev" />Previous</button>
        <button type="button" className="ml-2 flex h-3 items-center gap-[3px] text-[#8c8c8c]"><RoundIcon kind="check" />Check Answer</button>
        <button type="button" className="ml-2 flex h-3 items-center gap-[3px]"><RoundIcon kind="next" />Next</button>
        <button type="button" className="ml-2.5 flex h-3 items-center gap-[3px]">
          <svg viewBox="0 0 14 14" className="h-3.5 w-3.5" aria-hidden="true">
            <path d="M6 0 H14 V14 H6 V11 H11 V3 H6Z" fill="#c21414" /><path d="M10 3 L13 1 V13 L10 11Z" fill="#8d0a0a" />
            <path d="M0 5 H5 V2 L10 7 L5 12 V9 H0Z" fill="#e02a20" stroke="#fff" strokeWidth=".6" />
          </svg>
          Exit
        </button>
      </div>
      <div className="w-[26px] border-t-2 border-[#7f8485]" />
    </div>
  );
}

function PlayerScroll() {
  return (
    <div className="flex w-[19px] shrink-0 flex-col items-center border-l-4 border-[#7f8485] bg-[#ebe8d7] pt-1 pb-1" aria-hidden="true">
      <svg viewBox="0 0 10 10" className="h-2.5 w-2.5"><path d="M5 1 L9 9 H1Z" fill="#129012" stroke="#a9e56a" strokeWidth=".8" /></svg>
      <div className="mt-1 flex w-[11px] flex-1 flex-col rounded-b border border-[#8d9598] bg-white">
        <div className="-mx-px h-[322px] rounded border border-[#129012] border-l-[#8ed65a] bg-[#ebe8d7]" />
      </div>
      <svg viewBox="0 0 10 10" className="mt-1 h-2.5 w-2.5"><path d="M5 9 L9 1 H1Z" fill="#129012" stroke="#a9e56a" strokeWidth=".8" /></svg>
    </div>
  );
}

function QuestionPlayer() {
  return (
    <section className="mb-[7px] flex min-w-0 flex-1 flex-col border-t-2 border-[#56b046]">
      <StatusBar />
      <div className="flex flex-1 flex-col font-['Liberation_Sans',Arial,sans-serif] text-black">
        <PlayerToolbar />
        <div className="flex flex-1 flex-col bg-linear-to-b from-[#c4b9ab] via-[#beb2a3] via-30% to-[#86755f] pr-1 pb-[5px] pl-[5px]">
          <div className="flex h-5 items-end pl-[5px] text-[11px]">
            <span className="w-[84px] pb-1 text-white">Question 5 of 18</span>
            <span className="relative -mb-px flex h-5 w-[70px] items-center pl-1.5">
              <svg viewBox="0 0 70 20" className="absolute inset-0 h-full w-full" aria-hidden="true">
                <path d="M0.500 20 V4 Q0.500 0.500 4 0.500 H58 Q61 0.500 62 3 L69 20Z" fill="#a9e56a" stroke="#8d98a0" />
              </svg>
              <span className="relative pb-1">Correct</span>
              <svg viewBox="0 0 13 13" className="relative mb-0.5 ml-1 h-[13px] w-[13px]" aria-hidden="true"><path d="M1 7 L3.500 6 L5 9 L11 0.500 L12.500 1.500 L5.500 12.500 L4 12.500Z" fill="#6dc840" stroke="#2f8a1a" /></svg>
            </span>
          </div>
          <div className="flex flex-1 flex-col rounded-t-xs border border-[#8d98a0] bg-white">
            <div className="flex flex-1 flex-col border border-t-3 border-[#a9e56a]">
              <div className="flex flex-1 flex-col border-2 border-[#7f8485] border-t-[#74787b]">
                <div className="flex flex-1">
                  <div className="mt-[3px] ml-px flex-1 border-t border-[#8d98a0]">
                    <div className="flex items-start justify-between">
                      <div className="mt-[5px] ml-2 flex h-7 w-[450px] items-start gap-[5px] border-b border-[#e4e4e4] bg-[#fafafa] pt-1 pl-[5px] font-['Open_Sans',sans-serif]">
                        <SaplingMark className="h-5 w-5" />
                        <span className="flex flex-col">
                          <span className="text-[13px] leading-[13px] font-semibold text-[#4a4a4a]">Sapling<span className="pl-0.5 text-[#56b046]">Learning</span></span>
                          <span className="text-[7px] leading-[9px] text-[#8c8c8c]">macmillan learning</span>
                        </span>
                      </div>
                      <button type="button" className="mr-0.5 flex h-5 w-[52px] items-center gap-0.5 rounded-b-md border border-t-0 border-[#8d98a0] bg-[#e8edf5] pb-1 pl-1 text-[11px] text-[#333]">
                        Map
                        <svg viewBox="0 0 20 14" className="h-3.5 w-[19px]" aria-hidden="true" fill="#fff" stroke="#666">
                          <path d="M3 9 L8 4 M10 9 V5 M17 9 L12 4" /><rect x="7.500" y=".5" width="5" height="5" /><rect x=".5" y="8.500" width="5" height="5" /><rect x="7.500" y="8.500" width="5" height="5" /><rect x="14.500" y="8.500" width="5" height="5" />
                        </svg>
                      </button>
                    </div>
                    <div className="text-[13px] leading-[13px] whitespace-nowrap">
                      <p className="mt-[16px] ml-[49px]">
                        Rambutan is a fruit prized in Eastern Asia for its unique hairy look. Once peeled, it reveals a sweet, slightly<br />
                        sour grape like gummy tasting fruit. Below is a graph for a perfectly or (purely) competitive rambutan<br />
                        farmer.
                      </p>
                      <div className="flex pt-px">
                        <div className="w-[339px]">
                          <Graph />
                          <p className="mt-5 ml-[64px] text-[#d02020]">Correct.</p>
                        </div>
                        <div>
                          <p className="ml-[23px]">This firm is incurring a ____________. In the<br />long run, firms will ___________ this market.</p>
                          <Choices name="firm" checked={2} className="mt-[7px] ml-[47px] w-[180px] pl-[6px]" options={["profit ; leave", "loss ; enter", "profit ; enter", "loss ;  leave"]} />
                          <p className="mt-2 ml-[28px]">What is this firm's profit/loss (round to<br />the nearest penny)?</p>
                          <div className="mt-1.5 ml-[48px] h-[58px] w-[135px] border-2 border-[#7f8788] bg-[#ebe8d7] pt-[5px] pl-1.5 inset-ring inset-ring-[#b5b6ad]">
                            <label htmlFor="amount" className="ml-3.5 block text-[11px]">Number</label>
                            <div className="mt-[5px] flex items-center gap-1">
                              <span className="text-[15px]">$</span>
                              <input id="amount" type="text" defaultValue="14" className="h-7 w-[109px] border border-[#222] bg-white px-[5px] font-['Liberation_Serif',serif] text-[14px] font-bold" />
                            </div>
                          </div>
                          <p className="mt-3.5 ml-[28px]">If the market price fell to $9.51, then...</p>
                          <Choices name="market" checked={0} className="mt-1 w-[302px] pl-[6px]" options={["this firm is breaking even (zero profit).", "this firm would be incurring a loss.", "This firm would be at its shut down price.", "this firm would be making an economic profit."]} />
                        </div>
                      </div>
                    </div>
                  </div>
                  <PlayerScroll />
                </div>
                <PlayerNav />
              </div>
            </div>
          </div>
        </div>
      </div>
    </section>
  );
}

/* ---------- resources ---------- */

function SectionHeader({ open, children }) {
  return (
    <button type="button" aria-expanded={open} className="flex h-[29px] w-full shrink-0 items-center gap-1 border-t-2 border-[#003a75] bg-[#ebebeb] pl-1.5 text-left font-['Open_Sans',sans-serif] text-[12px] font-semibold">
      <svg viewBox="0 0 12 12" className="h-3 w-3" aria-hidden="true">
        <circle cx="6" cy="6" r="6" fill="#454545" />
        <path d={open ? "M3 5 H9 L6 8.500Z" : "M5 3 L8.500 6 L5 9Z"} fill="#fff" />
      </svg>
      {children}
    </button>
  );
}

const info = [
  ["Available From:", "11/3/2016 10:00 PM"],
  ["Due Date:", "11/10/2016 07:00 PM"],
  ["Points Possible:", "100"],
  ["Grade Category:", "Graded HW"],
  ["Description:", ""],
];

function Resources() {
  return (
    <aside className="flex w-[357px] shrink-0 flex-col">
      <h2 className="h-7 bg-[#003a75] pt-0.5 pl-2.5 text-[14px] font-semibold text-white">Resources</h2>
      <div className="relative ml-[7px] flex min-h-0 flex-1 flex-col border border-t-0 border-[#003a75] bg-white">
        <svg viewBox="0 0 8 5" className="absolute top-0 -left-2 h-[5px] w-2" aria-hidden="true"><path d="M0 0 H8 V5Z" fill="#0f6470" /></svg>
        <div className="flex min-h-0 flex-1">
          <div className="flex h-[602px] flex-1 flex-col overflow-hidden pt-[21px] pl-5 text-[12px] leading-[17px]">
            <SectionHeader open>Assignment Information</SectionHeader>
            <div className="pt-[5px] pl-2.5">
              <dl>
                {info.map(([k, v]) => (
                  <div key={k} className="flex h-[27px] items-center">
                    <dt className="w-[115px] font-['Open_Sans',sans-serif] font-semibold">{k}</dt>
                    <dd>{v}</dd>
                  </div>
                ))}
                <div className="w-[270px] pt-[5px]">
                  <dt className="float-left w-[115px] font-['Open_Sans',sans-serif] font-semibold">Policies:</dt>
                  <dd>Penalty Scheme - Summer 2016</dd>
                </div>
              </dl>
              <div className="mt-[22px] flex w-[260px] flex-col gap-3">
                <p>You can check your answers.</p>
                <p>You can view solutions after the due date.</p>
                <p>You have three attempts per question.</p>
                <p>You lose 20% of the points available to each answer in your question for each incorrect attempt at that answer.</p>
                <p>For multiple-choice questions, the penalty depends on the number of choices available.</p>
              </div>
            </div>
            <div className="mt-[22px] flex flex-col gap-2.5">
              <SectionHeader>eTextbook</SectionHeader>
              <SectionHeader>Help With This Topic</SectionHeader>
              <SectionHeader>Web Help &amp; Videos</SectionHeader>
              <SectionHeader>Technical Support and Bug Reports</SectionHeader>
            </div>
          </div>
          <div className="flex w-[15px] flex-col"><ScrollTrack thumb="h-[543px]" /></div>
        </div>
        <div className="mr-[15px] flex h-[15px] items-center bg-[#f1f1f1]" aria-hidden="true">
          <div className="flex w-[15px] justify-center"><Triangle dir="left" color="#a3a3a3" /></div>
          <div className="flex-1 pr-0.5"><div className="h-[11px] bg-[#c1c1c1]" /></div>
          <div className="flex w-[15px] justify-center"><Triangle dir="right" /></div>
        </div>
      </div>
    </aside>
  );
}

const footerLinks = ["about us", "careers", "partners", "privacy policy", "terms of use", "contact us", "help"];

function Footer() {
  return (
    <footer className="mt-auto mb-px flex h-6 shrink-0 items-stretch border-t border-[#dedede] bg-[#f7f7f7] font-['Open_Sans',sans-serif] text-[11px] text-[#777]">
      <span className="flex w-[609px] items-center pt-px pl-[5px]">© 2011-2016 Sapling Learning, Inc. - 10</span>
      <nav className="flex">
        {footerLinks.map((l) => (
          <a key={l} href="#" className="flex items-center border-r border-[#999] pt-px pr-[9px] pl-[13px] whitespace-nowrap last:border-r-0">{l}</a>
        ))}
      </nav>
    </footer>
  );
}

export default function App() {
  return (
    <div className="flex h-screen flex-col overflow-hidden bg-white font-['Noto_Sans',sans-serif] text-black">
      <TopPanel />
      <div className="flex min-h-0 flex-1">
        <Launcher />
        <div className="flex min-w-0 flex-1 flex-col">
          <TabStrip />
          <div className="border-b border-[#b9b8c4] bg-linear-to-r from-[#191747] to-[#0a0a2c]">
            <Toolbar />
            <BookmarkBar />
          </div>
          <div className="flex min-h-0 flex-1">
            <div className="flex min-w-0 flex-1 flex-col">
              <SiteHeader />
              <Breadcrumbs />
              <main className="flex gap-[13px] pr-[134px] pl-[9px]">
                <div className="flex min-w-0 flex-1 flex-col">
                  <h2 className="relative z-10 h-[29px] w-[228px] border-l-8 border-[#8cac2e] bg-[#56b046] pt-0.5 pl-[3px] text-[14px] font-semibold text-white">
                    My Assignment
                    <svg viewBox="0 0 8 5" className="absolute top-[29px] -left-2 h-[5px] w-2" aria-hidden="true"><path d="M0 0 H8 V5Z" fill="#5d7a1c" /></svg>
                  </h2>
                  <div className="-mt-px ml-2 flex gap-5 border border-[#56b046] pt-5 pr-[20px] pb-[17px] pl-5">
                    <ScoreTable />
                    <QuestionPlayer />
                  </div>
                </div>
                <Resources />
              </main>
              <Footer />
            </div>
            <div className="flex w-[15px] flex-col"><ScrollTrack thumb="h-[755px]" /></div>
          </div>
        </div>
      </div>
    </div>
  );
}
